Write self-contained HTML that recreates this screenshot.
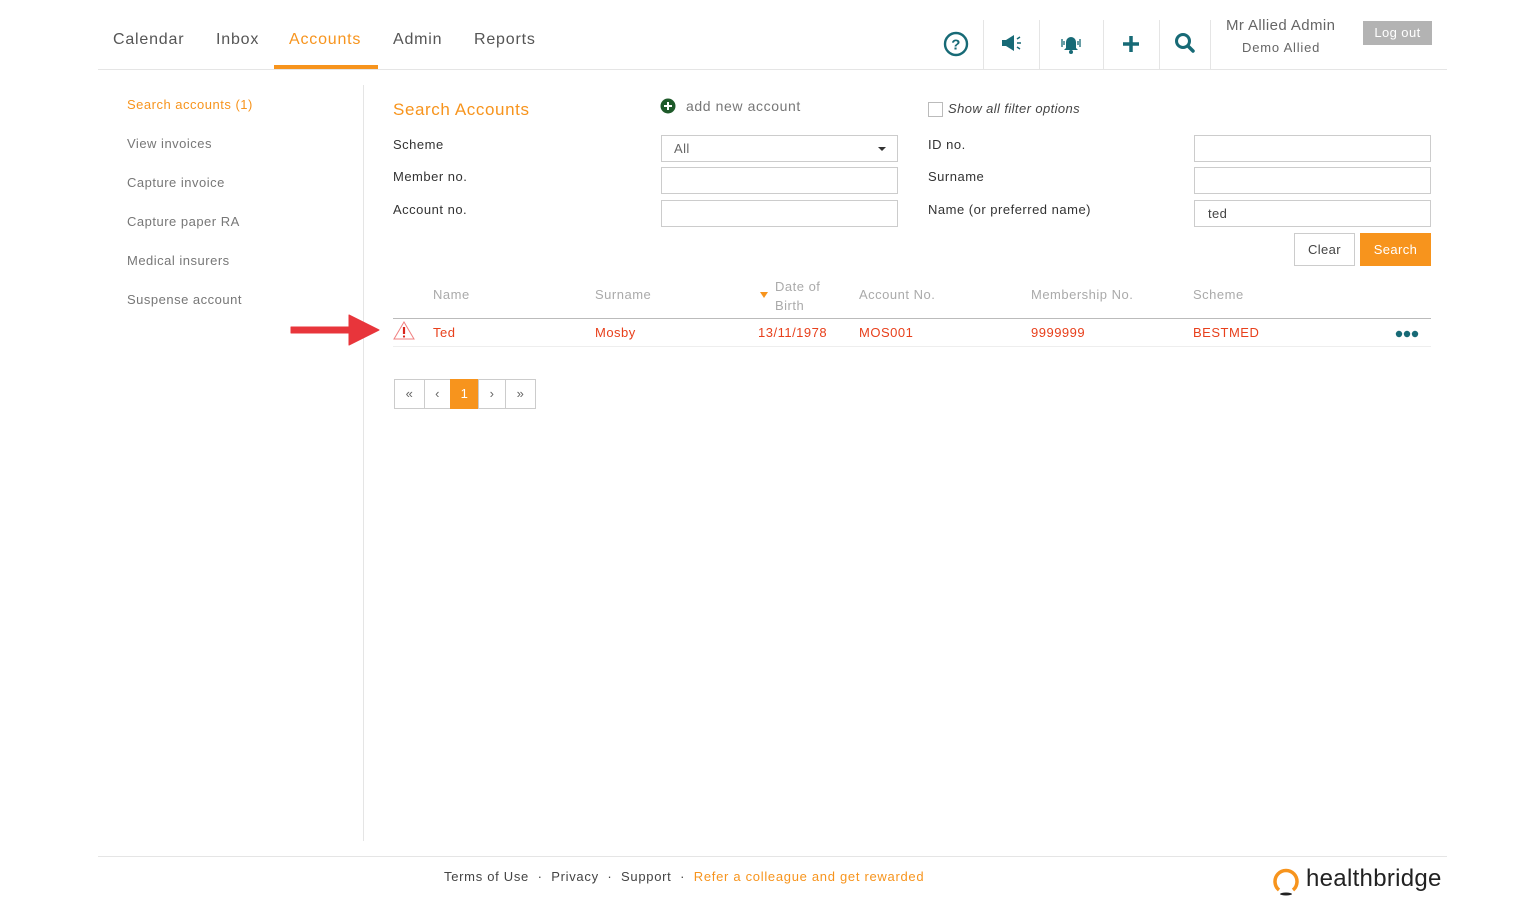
<!DOCTYPE html>
<html><head><meta charset="utf-8"><style>
*{margin:0;padding:0;box-sizing:border-box}
body{width:1515px;height:909px;background:#fff;font-family:"Liberation Sans",sans-serif;position:relative;overflow:hidden;color:#444;letter-spacing:0.4px}
.a{position:absolute;white-space:nowrap}
.nav{font-size:16px;color:#555;top:31px;letter-spacing:0.8px}
.side{font-size:13px;color:#777;left:127px;letter-spacing:0.5px}
.lbl{font-size:13px;color:#333;letter-spacing:0.5px}
.inp{position:absolute;border:1px solid #ccc;height:27px;background:#fff}
.th{font-size:13px;color:#aaa;letter-spacing:0.5px}
.td{font-size:13px;color:#e8401c;top:325px;letter-spacing:0.5px}
.sep{position:absolute;top:20px;width:1px;height:49px;background:#e5e5e5}
.pg{position:absolute;top:379px;height:30px;border:1px solid #ccc;font-size:13px;color:#666;text-align:center;line-height:28px}
</style></head><body>
<div class="a nav" style="left:113px">Calendar</div>
<div class="a nav" style="left:216px">Inbox</div>
<div class="a nav" style="left:289px;color:#f7941d">Accounts</div>
<div class="a nav" style="left:393px">Admin</div>
<div class="a nav" style="left:474px">Reports</div>
<div class="a" style="left:274px;top:65px;width:104px;height:4px;background:#f7941d"></div>
<div class="a" style="left:98px;top:69px;width:1349px;height:1px;background:#e5e5e5"></div>

<svg class="a" style="left:943px;top:31px" width="26" height="26" viewBox="0 0 26 26"><circle cx="13" cy="13" r="11" fill="none" stroke="#176a76" stroke-width="2.4"/><text x="13" y="18.5" text-anchor="middle" font-family="Liberation Sans" font-weight="bold" font-size="15" fill="#176a76">?</text></svg>
<div class="sep" style="left:983px"></div>
<svg class="a" style="left:1000px;top:34px" width="24" height="18" viewBox="0 0 24 18"><path d="M2 6h4l8-5v16l-8-5H2z" fill="#176a76"/><path d="M17 5l3-2M17 9h4M17 13l3 2" stroke="#176a76" stroke-width="1.5"/></svg>
<div class="sep" style="left:1039px"></div>
<svg class="a" style="left:1059px;top:31px" width="24" height="24" viewBox="0 0 24 24"><path d="M7 17V11a5 5 0 0 1 10 0v6l2 2H5z" fill="#176a76"/><circle cx="12" cy="21" r="2" fill="#176a76"/><path d="M3 8v8M21 8v8M5 10v4M19 10v4" stroke="#176a76" stroke-width="1.3"/></svg>
<div class="sep" style="left:1103px"></div>
<svg class="a" style="left:1121px;top:34px" width="20" height="20" viewBox="0 0 20 20"><path d="M10 2v16M2 10h16" stroke="#176a76" stroke-width="3.5"/></svg>
<div class="sep" style="left:1159px"></div>
<svg class="a" style="left:1174px;top:32px" width="22" height="22" viewBox="0 0 22 22"><circle cx="9" cy="9" r="6.5" fill="none" stroke="#176a76" stroke-width="3"/><path d="M14 14l5 5" stroke="#176a76" stroke-width="3.5" stroke-linecap="round"/></svg>
<div class="sep" style="left:1210px"></div>
<div class="a" style="left:1226px;top:17px;font-size:15px;color:#666">Mr Allied Admin</div>
<div class="a" style="left:1242px;top:40px;font-size:13px;color:#666;letter-spacing:0.8px">Demo Allied</div>
<div class="a" style="left:1363px;top:21px;width:69px;height:24px;background:#b3b3b3;color:#fff;font-size:13px;text-align:center;line-height:24px">Log out</div>

<div class="a side" style="top:97px;color:#f7941d">Search accounts (1)</div>
<div class="a side" style="top:136px">View invoices</div>
<div class="a side" style="top:175px">Capture invoice</div>
<div class="a side" style="top:214px">Capture paper RA</div>
<div class="a side" style="top:253px">Medical insurers</div>
<div class="a side" style="top:292px">Suspense account</div>
<div class="a" style="left:363px;top:85px;width:1px;height:756px;background:#e5e5e5"></div>

<div class="a" style="left:393px;top:100px;font-size:17px;color:#f7941d;letter-spacing:0.6px">Search Accounts</div>
<svg class="a" style="left:660px;top:98px" width="16" height="16"><circle cx="8" cy="8" r="7.5" fill="#1e5a2a"/><path d="M8 4v8M4 8h8" stroke="#fff" stroke-width="2"/></svg>
<div class="a" style="left:686px;top:98px;font-size:14px;color:#777;letter-spacing:0.6px">add new account</div>
<div class="a" style="left:928px;top:102px;width:15px;height:15px;border:1px solid #bbb"></div>
<div class="a" style="left:948px;top:101px;font-size:13px;color:#444;font-style:italic">Show all filter options</div>

<div class="a lbl" style="left:393px;top:137px">Scheme</div>
<div class="a lbl" style="left:393px;top:169px">Member no.</div>
<div class="a lbl" style="left:393px;top:202px">Account no.</div>
<div class="inp" style="left:661px;top:135px;width:237px;font-size:13px;color:#666;padding:5px 12px">All<span style="position:absolute;right:11px;top:11px;border:4px solid transparent;border-top:4px solid #333"></span></div>
<div class="inp" style="left:661px;top:167px;width:237px"></div>
<div class="inp" style="left:661px;top:200px;width:237px"></div>
<div class="a lbl" style="left:928px;top:137px">ID no.</div>
<div class="a lbl" style="left:928px;top:169px">Surname</div>
<div class="a lbl" style="left:928px;top:202px">Name (or preferred name)</div>
<div class="inp" style="left:1194px;top:135px;width:237px"></div>
<div class="inp" style="left:1194px;top:167px;width:237px"></div>
<div class="inp" style="left:1194px;top:200px;width:237px;font-size:13px;color:#444;padding:5px 13px">ted</div>
<div class="a" style="left:1294px;top:233px;width:61px;height:33px;border:1px solid #ccc;font-size:13px;color:#444;text-align:center;line-height:31px">Clear</div>
<div class="a" style="left:1360px;top:233px;width:71px;height:33px;background:#f7941d;font-size:13px;color:#fff;text-align:center;line-height:33px">Search</div>

<div class="a th" style="left:433px;top:287px">Name</div>
<div class="a th" style="left:595px;top:287px">Surname</div>
<div class="a" style="left:760px;top:292px;border:4px solid transparent;border-top:6px solid #f7941d"></div>
<div class="a th" style="left:775px;top:277px;line-height:19px">Date of<br>Birth</div>
<div class="a th" style="left:859px;top:287px">Account No.</div>
<div class="a th" style="left:1031px;top:287px">Membership No.</div>
<div class="a th" style="left:1193px;top:287px">Scheme</div>
<div class="a" style="left:393px;top:318px;width:1038px;height:1px;background:#bbb"></div>
<div class="a" style="left:393px;top:346px;width:1038px;height:1px;background:#eee"></div>
<svg class="a" style="left:393px;top:321px" width="22" height="19" viewBox="0 0 22 19"><path d="M11 1L21 18H1z" fill="none" stroke="#f08080" stroke-width="1"/><path d="M11 6v7" stroke="#d9261c" stroke-width="2.2"/><circle cx="11" cy="15.5" r="1.1" fill="#d9261c"/></svg>
<div class="a td" style="left:433px">Ted</div>
<div class="a td" style="left:595px">Mosby</div>
<div class="a td" style="left:758px">13/11/1978</div>
<div class="a td" style="left:859px">MOS001</div>
<div class="a td" style="left:1031px">9999999</div>
<div class="a td" style="left:1193px">BESTMED</div>
<svg class="a" style="left:1395px;top:330px" width="24" height="8"><circle cx="4" cy="4" r="3.2" fill="#176a76"/><circle cx="12" cy="4" r="3.2" fill="#176a76"/><circle cx="20" cy="4" r="3.2" fill="#176a76"/></svg>
<svg class="a" style="left:285px;top:312px" width="100" height="36" viewBox="0 0 100 36"><path d="M6 15h58V3l30 15-30 15V21H6z" fill="#e8353b" stroke="#e8353b" stroke-linejoin="round"/></svg>

<div class="pg" style="left:394px;width:31px">«</div>
<div class="pg" style="left:424px;width:27px">‹</div>
<div class="pg" style="left:450px;width:29px;background:#f7941d;border-color:#f7941d;color:#fff">1</div>
<div class="pg" style="left:478px;width:28px">›</div>
<div class="pg" style="left:505px;width:31px">»</div>

<div class="a" style="left:98px;top:856px;width:1349px;height:1px;background:#e5e5e5"></div>
<div class="a" style="left:444px;top:869px;font-size:13px;color:#444;letter-spacing:0.7px">Terms of Use &nbsp;· &nbsp;Privacy &nbsp;· &nbsp;Support &nbsp;· &nbsp;<span style="color:#f7941d">Refer a colleague and get rewarded</span></div>
<svg class="a" style="left:1271px;top:866px" width="30" height="32" viewBox="0 0 30 32"><path d="M8 24A11 11 0 1 1 22 24" fill="none" stroke="#f7941d" stroke-width="3.5"/><ellipse cx="15" cy="28" rx="6" ry="1.5" fill="#222"/></svg>
<div class="a" style="left:1306px;top:865px;font-size:24px;color:#222;letter-spacing:0.3px">healthbridge</div>
</body></html>
